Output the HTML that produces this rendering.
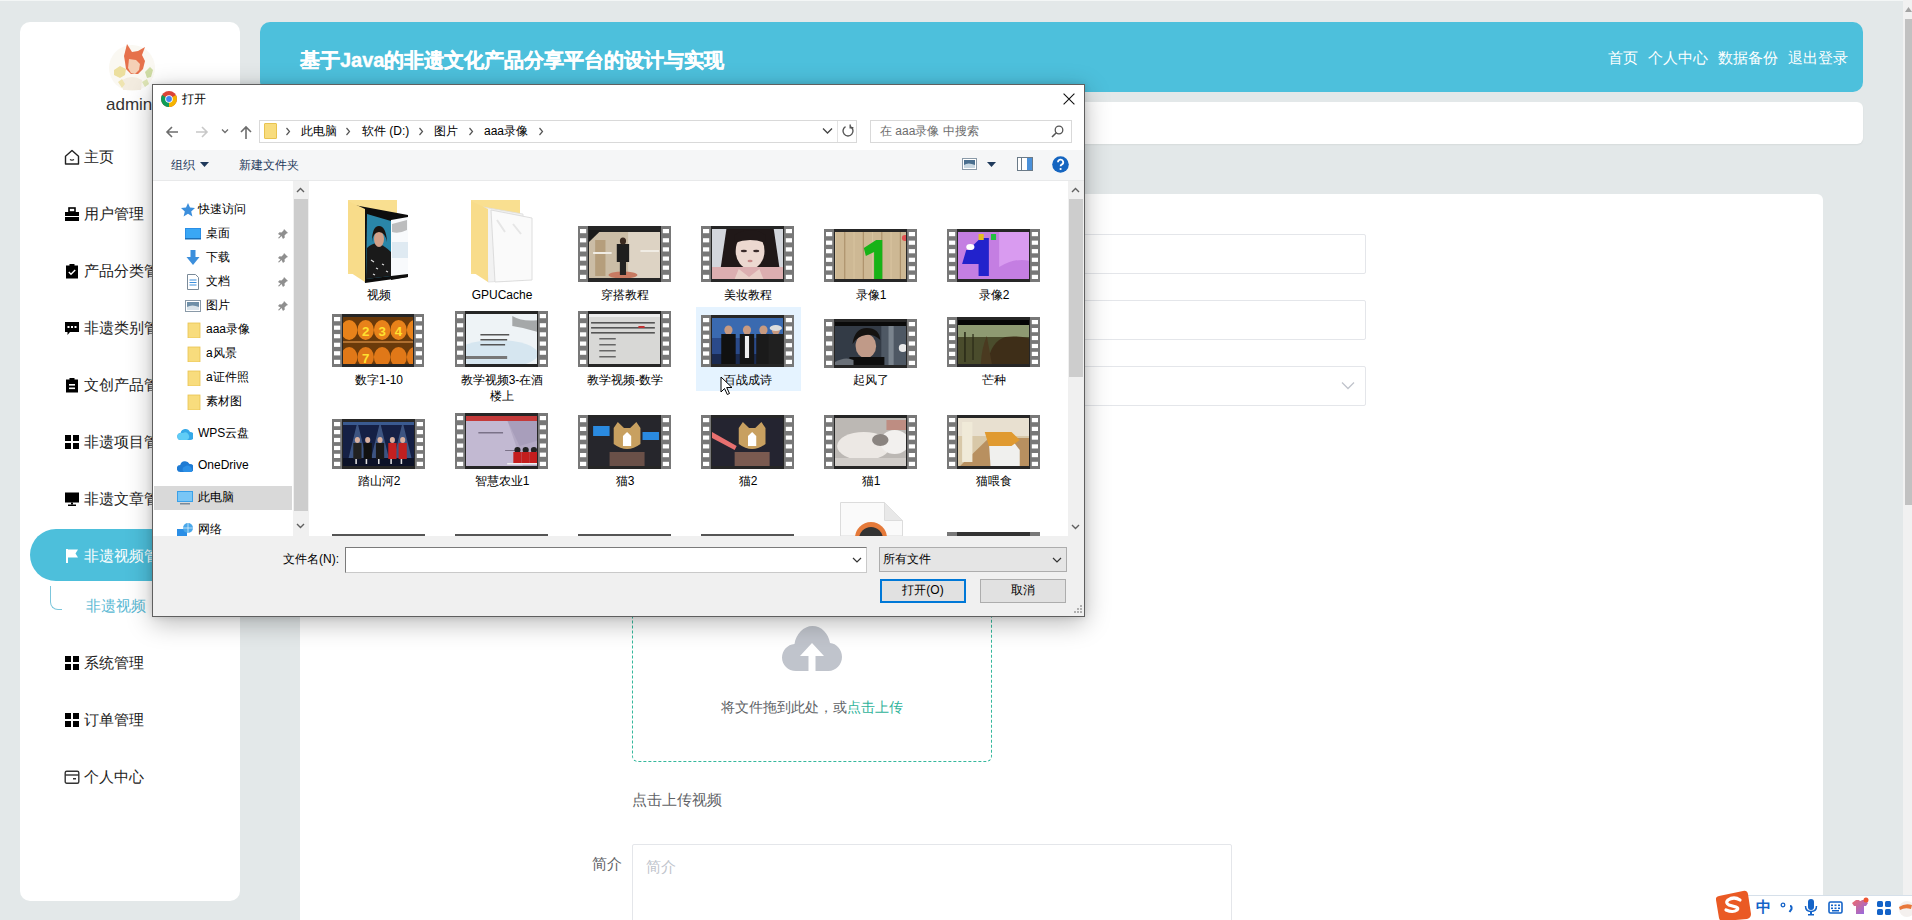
<!DOCTYPE html>
<html><head><meta charset="utf-8">
<style>
*{box-sizing:border-box;margin:0;padding:0}
html,body{width:1912px;height:920px;overflow:hidden}
body{background:#e3e8e9;font-family:"Liberation Sans",sans-serif;position:relative;color:#303133}
.abs{position:absolute}
.side{left:20px;top:22px;width:220px;height:879px;background:#fff;border-radius:10px}
.avatar{left:110px;top:46px;width:44px;height:44px;border-radius:50%;background:radial-gradient(circle at 55% 40%,#e88a5c 0,#f0b090 22%,#f6eee0 45%,#f8f5ec 70%,#fff 100%)}
.admin{left:106px;top:95px;font-size:17px;color:#333;line-height:20px}
.mi{left:64px;font-size:15px;color:#222;line-height:16px;height:16px;white-space:nowrap}
.mi svg{position:absolute;left:0;top:0}
.mi span{position:absolute;left:20px;top:0}
.active{left:30px;top:529px;width:205px;height:52px;border-radius:26px;background:#4dbfdb}
.header{left:260px;top:22px;width:1603px;height:70px;background:#4dc0dc;border-radius:10px}
.title{left:300px;top:47px;font-size:20px;font-weight:bold;color:#fff;line-height:26px;white-space:nowrap;-webkit-text-stroke:.35px #fff}
.nav{top:49px;font-size:15px;color:#fff;line-height:18px;white-space:nowrap}
.crumb{left:260px;top:102px;width:1603px;height:42px;background:#fff;border-radius:6px;box-shadow:0 1px 2px rgba(0,0,0,.06)}
.card{left:300px;top:194px;width:1523px;height:760px;background:#fff;border-radius:6px}
.inp{border:1px solid #e4e6ea;background:#fff;border-radius:2px}
.sb-track{left:1903px;top:0;width:9px;height:920px;background:#f1f1f1}
.dt{font-size:12px;line-height:14px;white-space:nowrap}
.sb-thumb{left:1905px;top:19px;width:7px;height:486px;background:#c1c1c1}
</style></head>
<body>
<!-- sidebar -->
<div class="abs side"></div>
<svg class="abs" style="left:108px;top:42px" width="48" height="50" viewBox="0 0 48 50"><defs><filter id="bl"><feGaussianBlur stdDeviation=".7"/></filter></defs><circle cx="24" cy="26" r="23" fill="#faf8f2"/><g filter="url(#bl)"><path d="M16 14l3-12 5 8 6-1 7-4-3 8 3 6-2 8-5 5-7 0-5-5-1-7z" fill="#e6714c"/><path d="M21 17l7 1 4 4-1 6-4 4-4-1-3-5z" fill="#f5d0b6"/><path d="M6 28l6-4 6 3-1 6-5 3-6-3z" fill="#ecdf9e"/><path d="M37 30l5-5 3 3-2 7-4 1z" fill="#cfdca4"/><path d="M14 38q10-6 20 0l-1 10H15z" fill="#f3ece0"/><path d="M10 40l4-3 3 5-3 4z" fill="#efe4b0"/><path d="M34 40l5-3 2 5-4 3z" fill="#dfe6b6"/></g></svg>
<div class="abs admin">admin</div>

<div class="abs active"></div>
<div class="abs mi" style="top:149px"><svg width="16" height="16" viewBox="0 0 16 16"><path d="M1.5 7.2 8 1.5l6.5 5.7V15h-13z" fill="none" stroke="#222" stroke-width="1.4" stroke-linejoin="round"/><path d="M6 10.5q2 1.4 4 0" fill="none" stroke="#222" stroke-width="1.3"/></svg><span>主页</span></div>
<div class="abs mi" style="top:206px"><svg width="16" height="16" viewBox="0 0 16 16"><rect x="5" y="2" width="6" height="4" fill="none" stroke="#000" stroke-width="1.6"/><rect x="1" y="6" width="14" height="4" fill="#000"/><rect x="1" y="11" width="14" height="4" fill="#000"/></svg><span>用户管理</span></div>
<div class="abs mi" style="top:263px"><svg width="16" height="16" viewBox="0 0 16 16"><rect x="2" y="2.5" width="12" height="13" fill="#000"/><rect x="5.5" y="1" width="5" height="2.5" fill="#000"/><path d="M4.8 9 7 11.2 11.2 7" fill="none" stroke="#fff" stroke-width="1.4"/></svg><span>产品分类管理</span></div>
<div class="abs mi" style="top:320px"><svg width="16" height="16" viewBox="0 0 16 16"><path d="M1 2h14v10H6l-2.5 3v-3H1z" fill="#000"/><rect x="3.5" y="6" width="2" height="2" fill="#fff"/><rect x="7" y="6" width="2" height="2" fill="#fff"/><rect x="10.5" y="6" width="2" height="2" fill="#fff"/></svg><span>非遗类别管理</span></div>
<div class="abs mi" style="top:377px"><svg width="16" height="16" viewBox="0 0 16 16"><rect x="2" y="2.5" width="12" height="13" fill="#000"/><rect x="5.5" y="1" width="5" height="2.5" fill="#000"/><rect x="5" y="7" width="6" height="1.6" fill="#fff"/><rect x="5" y="10.5" width="6" height="1.6" fill="#fff"/></svg><span>文创产品管理</span></div>
<div class="abs mi" style="top:434px"><svg width="16" height="16" viewBox="0 0 16 16"><rect x="1" y="1" width="6" height="6" fill="#000"/><rect x="9" y="1" width="6" height="6" fill="#000"/><rect x="1" y="9" width="6" height="6" fill="#000"/><rect x="9" y="9" width="6" height="6" fill="#000"/></svg><span>非遗项目管理</span></div>
<div class="abs mi" style="top:491px"><svg width="16" height="16" viewBox="0 0 16 16"><rect x="1" y="1.5" width="14" height="10" fill="#000"/><rect x="7" y="11.5" width="2" height="2" fill="#000"/><rect x="4" y="13.5" width="8" height="1.5" fill="#000"/></svg><span>非遗文章管理</span></div>
<div class="abs mi" style="top:655px"><svg width="16" height="16" viewBox="0 0 16 16"><rect x="1" y="1" width="6" height="6" fill="#000"/><rect x="9" y="1" width="6" height="6" fill="#000"/><rect x="1" y="9" width="6" height="6" fill="#000"/><rect x="9" y="9" width="6" height="6" fill="#000"/></svg><span>系统管理</span></div>
<div class="abs mi" style="top:712px"><svg width="16" height="16" viewBox="0 0 16 16"><rect x="1" y="1" width="6" height="6" fill="#000"/><rect x="9" y="1" width="6" height="6" fill="#000"/><rect x="1" y="9" width="6" height="6" fill="#000"/><rect x="9" y="9" width="6" height="6" fill="#000"/></svg><span>订单管理</span></div>
<div class="abs mi" style="top:769px"><svg width="16" height="16" viewBox="0 0 16 16"><rect x="1.2" y="2.2" width="13.6" height="12" rx="1.5" fill="none" stroke="#333" stroke-width="1.4"/><path d="M1.2 6h13.6" stroke="#333" stroke-width="1.4"/><rect x="9" y="9" width="3" height="1.5" fill="#333"/></svg><span>个人中心</span></div>
<div class="abs mi" style="top:548px;color:#fff"><svg width="16" height="16" viewBox="0 0 16 16"><path d="M2 1h2v14H2z" fill="#fff"/><path d="M4 1.5h10l-2.5 4 2.5 4H4z" fill="#fff"/></svg><span>非遗视频管理</span></div>
<div class="abs" style="left:50px;top:586px;width:12px;height:24px;border-left:1.5px solid #7cc6dc;border-bottom:1.5px solid #7cc6dc;border-bottom-left-radius:8px"></div>
<div class="abs mi" style="left:86px;top:598px;color:#5ab8d3"><span style="left:0">非遗视频</span></div>
<div class="abs sb-track"></div>
<div class="abs sb-thumb"></div>
<div class="abs" style="left:0;top:0;width:1903px;height:1px;background:#f3f6f6"></div>
<svg class="abs" style="left:1905px;top:6px" width="7" height="6" viewBox="0 0 7 6"><path d="M0 6 3.5 1 7 6z" fill="#a3a3a3"/></svg>

<!-- header -->
<div class="abs header"></div>
<div class="abs title">基于Java的非遗文化产品分享平台的设计与实现</div>
<div class="abs nav" style="left:1608px">首页</div>
<div class="abs nav" style="left:1648px">个人中心</div>
<div class="abs nav" style="left:1718px">数据备份</div>
<div class="abs nav" style="left:1788px">退出登录</div>
<div class="abs crumb"></div>

<!-- main card -->
<div class="abs card"></div>
<div class="abs inp" style="left:632px;top:234px;width:734px;height:40px"></div>
<div class="abs inp" style="left:632px;top:300px;width:734px;height:40px"></div>
<div class="abs inp" style="left:632px;top:366px;width:734px;height:40px"></div>

<!-- upload -->
<div class="abs" style="left:632px;top:581px;width:360px;height:181px;border:1px dashed #35b89c;border-radius:6px;background:#fff"></div>
<svg class="abs" style="left:782px;top:626px" width="60" height="45" viewBox="0 0 60 45"><path d="M14 45C6 45 0 39 0 31.5 0 24.5 5.5 18.5 12.5 18 14 8 21.5 0 30.5 0 39.5 0 46.5 7.5 48 17 54.5 17.5 60 23.5 60 31 60 38.5 54 45 46.5 45z" fill="#c0c4cc"/><path d="M30 17 18 30h8.5v15h7V30H42z" fill="#fff"/></svg>
<div class="abs" style="left:721px;top:699px;font-size:14px;line-height:16px;color:#606266;white-space:nowrap">将文件拖到此处，或<span style="color:#2fb39a">点击上传</span></div>
<div class="abs" style="left:632px;top:792px;font-size:15px;line-height:16px;color:#606266;white-space:nowrap">点击上传视频</div>
<div class="abs" style="left:592px;top:856px;font-size:15px;line-height:16px;color:#606266;white-space:nowrap">简介</div>
<div class="abs" style="left:632px;top:844px;width:600px;height:120px;border:1px solid #e4e6ea;border-radius:2px"></div>
<div class="abs" style="left:646px;top:859px;font-size:15px;line-height:16px;color:#c0c4cc;white-space:nowrap">简介</div>
<svg class="abs" style="left:1341px;top:381px" width="14" height="9" viewBox="0 0 14 9"><path d="M1 1.5 7 7.5 13 1.5" fill="none" stroke="#c0c4cc" stroke-width="1.3"/></svg>

<!-- IME bar -->
<div class="abs" style="left:1744px;top:895px;width:168px;height:25px;background:#fff;border-top:1px solid #d6e0ea"></div>
<svg class="abs" style="left:1716px;top:890px" width="36" height="30" viewBox="0 0 36 30"><path d="M3 6 27 1q4-1 5 3l3 20q0 4-4 5L8 31q-4 1-5-3L0 10q-1-3 3-4z" fill="#ea5a24"/><path d="M24 10q-6-4-12 0-3 3 1 5l7 2q3 1 1 3-4 3-11 0" fill="none" stroke="#fff" stroke-width="3.2" stroke-linecap="round"/></svg>
<div class="abs" style="left:1756px;top:899px;font-size:15px;font-weight:bold;line-height:16px;color:#1463c8">中</div>
<svg class="abs" style="left:1780px;top:900px" width="14" height="14" viewBox="0 0 14 14"><circle cx="3" cy="5" r="1.8" fill="none" stroke="#1463c8" stroke-width="1.3"/><path d="M10 6q2 0 1.5 3l-2 3" fill="none" stroke="#1463c8" stroke-width="2"/></svg>
<svg class="abs" style="left:1804px;top:899px" width="14" height="17" viewBox="0 0 14 17"><rect x="4" y="0" width="6" height="11" rx="3" fill="#1463c8"/><path d="M1.5 7q0 5.5 5.5 5.5T12.5 7" fill="none" stroke="#1463c8" stroke-width="1.5"/><rect x="6" y="12" width="2" height="3" fill="#1463c8"/><rect x="4" y="15" width="6" height="1.5" fill="#1463c8"/></svg>
<svg class="abs" style="left:1828px;top:901px" width="15" height="13" viewBox="0 0 15 13"><rect x="1" y="1" width="13" height="11" rx="1.5" fill="none" stroke="#1463c8" stroke-width="1.6"/><g fill="#1463c8"><rect x="3" y="3.5" width="2" height="1.6"/><rect x="6.5" y="3.5" width="2" height="1.6"/><rect x="10" y="3.5" width="2" height="1.6"/><rect x="3" y="6.5" width="2" height="1.6"/><rect x="6.5" y="6.5" width="2" height="1.6"/><rect x="10" y="6.5" width="2" height="1.6"/><rect x="4" y="9" width="7" height="1.5"/></g></svg>
<svg class="abs" style="left:1851px;top:897px" width="18" height="18" viewBox="0 0 18 18"><defs><linearGradient id="tsh" x1="0" y1="0" x2="1" y2="1"><stop offset="0" stop-color="#f06a6a"/><stop offset="1" stop-color="#8a6af0"/></linearGradient></defs><path d="M1 6l4-3h3q1 2 3 0h3l3 3-2 3h-2v8H5V9H3z" fill="url(#tsh)"/><circle cx="15" cy="3" r="2.5" fill="#ee5533"/></svg>
<svg class="abs" style="left:1877px;top:901px" width="14" height="14" viewBox="0 0 14 14"><g fill="#1463c8"><rect x="0" y="0" width="6" height="6" rx="1.5"/><rect x="8" y="0" width="6" height="6" rx="1.5"/><rect x="0" y="8" width="6" height="6" rx="1.5"/><rect x="8" y="8" width="6" height="6" rx="1.5"/></g></svg>
<svg class="abs" style="left:1897px;top:899px" width="15" height="18" viewBox="0 0 15 18"><circle cx="10" cy="10" r="8" fill="#f4f0ee"/><path d="M2 8q6-4 13-2l-1 4q-6-2-11 1z" fill="#e8773a"/></svg>

<!--DIALOG-->
<div class="abs" style="left:152px;top:84px;width:933px;height:533px;background:#fff;border:1px solid #5f5f5f;box-shadow:0 6px 24px rgba(0,0,0,.28),0 0 6px rgba(0,0,0,.12)"></div>
<svg class="abs" style="left:161px;top:91px" width="16" height="16" viewBox="0 0 16 16"><circle cx="8" cy="8" r="8" fill="#db4437"/><path d="M8 8 1.1 4A8 8 0 0 0 8 16z" fill="#0f9d58"/><path d="M8 8 14.9 4A8 8 0 0 1 8 16z" fill="#f4b400"/><circle cx="8" cy="8" r="3.8" fill="#fff"/><circle cx="8" cy="8" r="2.9" fill="#4285f4"/></svg>
<div class="abs dt" style="left:182px;top:92px;font-size:12px;color:#000">打开</div>
<svg class="abs" style="left:1063px;top:93px" width="12" height="12" viewBox="0 0 12 12"><path d="M.6 .6 11.4 11.4M11.4 .6 .6 11.4" stroke="#111" stroke-width="1.1"/></svg>
<svg class="abs" style="left:164px;top:124px" width="16" height="16" viewBox="0 0 16 16"><path d="M14 8H3M8 3 3 8l5 5" fill="none" stroke="#6d6d6d" stroke-width="1.6"/></svg>
<svg class="abs" style="left:194px;top:124px" width="16" height="16" viewBox="0 0 16 16"><path d="M2 8h11M8 3l5 5-5 5" fill="none" stroke="#c8c8c8" stroke-width="1.6"/></svg>
<svg class="abs" style="left:221px;top:128px" width="8" height="6" viewBox="0 0 8 6"><path d="M1 1.5 4 4.5 7 1.5" fill="none" stroke="#6d6d6d" stroke-width="1.3"/></svg>
<svg class="abs" style="left:238px;top:124px" width="16" height="16" viewBox="0 0 16 16"><path d="M8 15V3M3 8l5-5 5 5" fill="none" stroke="#6d6d6d" stroke-width="1.6"/></svg>
<div class="abs" style="left:259px;top:120px;width:598px;height:23px;border:1px solid #d9d9d9;background:#fff"></div>
<div class="abs" style="left:264px;top:123px;width:13px;height:16px;background:#f8dc7d;border:1px solid #e8c350;border-radius:1px"></div>
<svg class="abs" style="left:285px;top:127px" width="6" height="9" viewBox="0 0 6 9"><path d="M1.5 1 4.5 4.5 1.5 8" fill="none" stroke="#555" stroke-width="1.2"/></svg>
<div class="abs dt" style="left:301px;top:124px;font-size:12px;color:#000">此电脑</div>
<svg class="abs" style="left:345px;top:127px" width="6" height="9" viewBox="0 0 6 9"><path d="M1.5 1 4.5 4.5 1.5 8" fill="none" stroke="#555" stroke-width="1.2"/></svg>
<div class="abs dt" style="left:362px;top:124px;font-size:12px;color:#000">软件 (D:)</div>
<svg class="abs" style="left:418px;top:127px" width="6" height="9" viewBox="0 0 6 9"><path d="M1.5 1 4.5 4.5 1.5 8" fill="none" stroke="#555" stroke-width="1.2"/></svg>
<div class="abs dt" style="left:434px;top:124px;font-size:12px;color:#000">图片</div>
<svg class="abs" style="left:468px;top:127px" width="6" height="9" viewBox="0 0 6 9"><path d="M1.5 1 4.5 4.5 1.5 8" fill="none" stroke="#555" stroke-width="1.2"/></svg>
<div class="abs dt" style="left:484px;top:124px;font-size:12px;color:#000">aaa录像</div>
<svg class="abs" style="left:538px;top:127px" width="6" height="9" viewBox="0 0 6 9"><path d="M1.5 1 4.5 4.5 1.5 8" fill="none" stroke="#555" stroke-width="1.2"/></svg>
<svg class="abs" style="left:822px;top:127px" width="11" height="8" viewBox="0 0 11 8"><path d="M1 1.5 5.5 6 10 1.5" fill="none" stroke="#444" stroke-width="1.3"/></svg>
<div class="abs" style="left:837px;top:121px;width:1px;height:21px;background:#e3e3e3"></div>
<svg class="abs" style="left:841px;top:124px" width="14" height="14" viewBox="0 0 14 14"><path d="M4.5 2.6A5 5 0 1 0 9.5 2.6" fill="none" stroke="#555" stroke-width="1.4"/><path d="M9.2 .5v3.2h3.2" fill="none" stroke="#555" stroke-width="1.4"/></svg>
<div class="abs" style="left:870px;top:120px;width:202px;height:23px;border:1px solid #d9d9d9;background:#fff"></div>
<div class="abs dt" style="left:880px;top:124px;font-size:12px;color:#6d6d6d">在 aaa录像 中搜索</div>
<svg class="abs" style="left:1051px;top:125px" width="13" height="13" viewBox="0 0 13 13"><circle cx="8" cy="5" r="3.8" fill="none" stroke="#555" stroke-width="1.3"/><path d="M5.3 7.7 1 12" stroke="#555" stroke-width="1.6"/></svg>
<div class="abs" style="left:153px;top:150px;width:931px;height:31px;background:#f5f6f7;border-bottom:1px solid #e8e9ea"></div>
<div class="abs dt" style="left:171px;top:158px;font-size:12px;color:#1e395b">组织</div>
<svg class="abs" style="left:200px;top:162px" width="9" height="5" viewBox="0 0 9 5"><path d="M0 0h9L4.5 5z" fill="#1e395b"/></svg>
<div class="abs dt" style="left:239px;top:158px;font-size:12px;color:#1e395b">新建文件夹</div>
<svg class="abs" style="left:962px;top:158px" width="15" height="12" viewBox="0 0 15 12"><rect x=".5" y=".5" width="14" height="11" fill="#fff" stroke="#8a9aa8"/><rect x="2" y="2" width="11" height="8" fill="#4a6f8f"/><path d="M2 7q4-3 11 0v3H2z" fill="#c9d8e2"/></svg>
<svg class="abs" style="left:987px;top:162px" width="9" height="5" viewBox="0 0 9 5"><path d="M0 0h9L4.5 5z" fill="#1e395b"/></svg>
<svg class="abs" style="left:1017px;top:157px" width="16" height="14" viewBox="0 0 16 14"><rect x=".5" y=".5" width="15" height="13" fill="#fff" stroke="#6a7a88"/><rect x="10" y="1" width="5" height="12" fill="#4a90d9"/><path d="M4.5 1v12" stroke="#6a7a88"/></svg>
<svg class="abs" style="left:1052px;top:156px" width="17" height="17" viewBox="0 0 17 17"><circle cx="8.5" cy="8.5" r="8.3" fill="#1565c0"/><path d="M6 6.3a2.6 2.6 0 1 1 3.6 2.3c-.8.4-1 .8-1 1.7" fill="none" stroke="#fff" stroke-width="1.8"/><circle cx="8.6" cy="13" r="1.1" fill="#fff"/></svg>
<div class="abs" style="left:154px;top:486px;width:138px;height:24px;background:#d9d9d9"></div>
<svg class="abs" style="left:180px;top:202px" width="16" height="16" viewBox="0 0 16 16"><path d="M8 1l2 4.6 5 .5-3.8 3.3 1.2 5L8 11.8 3.6 14.4l1.2-5L1 6.1l5-.5z" fill="#3c8fdc"/></svg>
<div class="abs dt" style="left:198px;top:202px;font-size:12px;color:#000">快速访问</div>
<svg class="abs" style="left:185px;top:226px" width="16" height="16" viewBox="0 0 16 16"><rect x="0" y="2" width="16" height="11" fill="#2a8ee6"/><rect x="1" y="3" width="14" height="9" fill="#39a7f5"/><rect x="0" y="12" width="16" height="1.5" fill="#1b6fb8"/></svg>
<div class="abs dt" style="left:206px;top:226px;font-size:12px;color:#000">桌面</div>
<svg class="abs" style="left:185px;top:250px" width="16" height="16" viewBox="0 0 16 16"><path d="M5.5 0h5v7h4L8 15 1.5 7h4z" fill="#3c8fdc"/></svg>
<div class="abs dt" style="left:206px;top:250px;font-size:12px;color:#000">下载</div>
<svg class="abs" style="left:185px;top:274px" width="16" height="16" viewBox="0 0 16 16"><path d="M2.5.5h8l3 3v12h-11z" fill="#fff" stroke="#7a8a99"/><path d="M4.5 6h7M4.5 8.5h7M4.5 11h7" stroke="#3c8fdc" stroke-width="1"/></svg>
<div class="abs dt" style="left:206px;top:274px;font-size:12px;color:#000">文档</div>
<svg class="abs" style="left:185px;top:298px" width="16" height="16" viewBox="0 0 16 16"><rect x=".5" y="2.5" width="15" height="11" fill="#fff" stroke="#8a9aa8"/><rect x="2" y="4" width="12" height="8" fill="#6f8fa8"/><path d="M2 9q5-3 12 0v3H2z" fill="#d9e3ea"/></svg>
<div class="abs dt" style="left:206px;top:298px;font-size:12px;color:#000">图片</div>
<svg class="abs" style="left:187px;top:322px" width="16" height="16" viewBox="0 0 16 16"><rect x="1" y="1" width="12" height="15" fill="#f8dc7d"/><rect x="1" y="1" width="12" height="15" fill="none" stroke="#e8c350" stroke-width=".8"/></svg>
<div class="abs dt" style="left:206px;top:322px;font-size:12px;color:#000">aaa录像</div>
<svg class="abs" style="left:187px;top:346px" width="16" height="16" viewBox="0 0 16 16"><rect x="1" y="1" width="12" height="15" fill="#f8dc7d"/><rect x="1" y="1" width="12" height="15" fill="none" stroke="#e8c350" stroke-width=".8"/></svg>
<div class="abs dt" style="left:206px;top:346px;font-size:12px;color:#000">a风景</div>
<svg class="abs" style="left:187px;top:370px" width="16" height="16" viewBox="0 0 16 16"><rect x="1" y="1" width="12" height="15" fill="#f8dc7d"/><rect x="1" y="1" width="12" height="15" fill="none" stroke="#e8c350" stroke-width=".8"/></svg>
<div class="abs dt" style="left:206px;top:370px;font-size:12px;color:#000">a证件照</div>
<svg class="abs" style="left:187px;top:394px" width="16" height="16" viewBox="0 0 16 16"><rect x="1" y="1" width="12" height="15" fill="#f8dc7d"/><rect x="1" y="1" width="12" height="15" fill="none" stroke="#e8c350" stroke-width=".8"/></svg>
<div class="abs dt" style="left:206px;top:394px;font-size:12px;color:#000">素材图</div>
<svg class="abs" style="left:177px;top:426px" width="16" height="16" viewBox="0 0 16 16"><path d="M4 14a3.5 3.5 0 0 1-.5-7A5 5 0 0 1 13 6a4 4 0 0 1 0 8z" fill="#35a9e8"/><path d="M4 14a3.5 3.5 0 0 1 0-7h2a4 4 0 0 1 4 7z" fill="#60cdf6"/></svg>
<div class="abs dt" style="left:198px;top:426px;font-size:12px;color:#000">WPS云盘</div>
<svg class="abs" style="left:177px;top:458px" width="16" height="16" viewBox="0 0 16 16"><path d="M3.5 14a3.5 3.5 0 0 1-.3-7A5 5 0 0 1 12.5 6 4 4 0 0 1 13 14z" fill="#1e7bd4"/><path d="M7 14a3 3 0 0 1 1-5.5 4 4 0 0 1 6.5 2A2 2 0 0 1 14 14z" fill="#2b8fe6"/></svg>
<div class="abs dt" style="left:198px;top:458px;font-size:12px;color:#000">OneDrive</div>
<svg class="abs" style="left:177px;top:490px" width="16" height="16" viewBox="0 0 16 16"><rect x="0" y="1" width="16" height="11" fill="#3aa0e8"/><rect x="1" y="2" width="14" height="9" fill="#79c6f6"/><rect x="3" y="13" width="10" height="1.5" fill="#7a8a99"/></svg>
<div class="abs dt" style="left:198px;top:490px;font-size:12px;color:#000">此电脑</div>
<svg class="abs" style="left:177px;top:522px" width="16" height="16" viewBox="0 0 16 16"><rect x="0" y="7" width="10" height="8" fill="#2a8ee6"/><circle cx="11" cy="6" r="5" fill="#4aa8ea"/><path d="M11 1v10M6 6h10" stroke="#fff" stroke-width=".6"/></svg>
<div class="abs dt" style="left:198px;top:522px;font-size:12px;color:#000">网络</div>
<svg class="abs" style="left:278px;top:228px" width="11" height="11" viewBox="0 0 11 11"><path d="M6 1l4 4-1.5.5-2 2 .3 2L5 11 3.5 8 1 10.5 0 10l2.5-2.5L0 6l1.5-1.8 2 .3 2-2z" fill="#8f8f8f"/></svg>
<svg class="abs" style="left:278px;top:252px" width="11" height="11" viewBox="0 0 11 11"><path d="M6 1l4 4-1.5.5-2 2 .3 2L5 11 3.5 8 1 10.5 0 10l2.5-2.5L0 6l1.5-1.8 2 .3 2-2z" fill="#8f8f8f"/></svg>
<svg class="abs" style="left:278px;top:276px" width="11" height="11" viewBox="0 0 11 11"><path d="M6 1l4 4-1.5.5-2 2 .3 2L5 11 3.5 8 1 10.5 0 10l2.5-2.5L0 6l1.5-1.8 2 .3 2-2z" fill="#8f8f8f"/></svg>
<svg class="abs" style="left:278px;top:300px" width="11" height="11" viewBox="0 0 11 11"><path d="M6 1l4 4-1.5.5-2 2 .3 2L5 11 3.5 8 1 10.5 0 10l2.5-2.5L0 6l1.5-1.8 2 .3 2-2z" fill="#8f8f8f"/></svg>
<div class="abs" style="left:293px;top:181px;width:16px;height:355px;background:#f0f0f0"></div>
<div class="abs" style="left:294px;top:199px;width:14px;height:312px;background:#cdcdcd"></div>
<svg class="abs" style="left:296px;top:187px" width="9" height="6" viewBox="0 0 9 6"><path d="M1 5 4.5 1.5 8 5" fill="none" stroke="#606060" stroke-width="1.4"/></svg>
<svg class="abs" style="left:296px;top:523px" width="9" height="6" viewBox="0 0 9 6"><path d="M1 1 4.5 4.5 8 1" fill="none" stroke="#606060" stroke-width="1.4"/></svg>
<div class="abs" style="left:309px;top:181px;width:2px;height:355px;background:#fff"></div>
<div class="abs" style="left:1068px;top:181px;width:16px;height:355px;background:#f0f0f0"></div>
<div class="abs" style="left:1069px;top:199px;width:14px;height:178px;background:#cdcdcd"></div>
<svg class="abs" style="left:1071px;top:187px" width="9" height="6" viewBox="0 0 9 6"><path d="M1 5 4.5 1.5 8 5" fill="none" stroke="#606060" stroke-width="1.4"/></svg>
<svg class="abs" style="left:1071px;top:524px" width="9" height="6" viewBox="0 0 9 6"><path d="M1 1 4.5 4.5 8 1" fill="none" stroke="#606060" stroke-width="1.4"/></svg>
<div class="abs" style="left:153px;top:536px;width:931px;height:80px;background:#f0f0f0"></div>
<div class="abs dt" style="left:283px;top:552px;font-size:12px;color:#000">文件名(N):</div>
<div class="abs" style="left:345px;top:547px;width:522px;height:26px;background:#fff;border:1px solid #7a7a7a;border-right-color:#c9c9c9;border-bottom-color:#c9c9c9"></div>
<svg class="abs" style="left:852px;top:557px" width="10" height="6" viewBox="0 0 10 6"><path d="M1 1 5 5 9 1" fill="none" stroke="#333" stroke-width="1.2"/></svg>
<div class="abs" style="left:879px;top:547px;width:188px;height:25px;background:#e5e5e5;border:1px solid #adadad"></div>
<div class="abs dt" style="left:883px;top:552px;font-size:12px;color:#000">所有文件</div>
<svg class="abs" style="left:1052px;top:557px" width="10" height="6" viewBox="0 0 10 6"><path d="M1 1 5 5 9 1" fill="none" stroke="#333" stroke-width="1.2"/></svg>
<div class="abs" style="left:880px;top:579px;width:86px;height:24px;background:#e1e1e1;border:2px solid #0078d7"></div>
<div class="abs dt" style="left:880px;top:583px;font-size:12px;color:#000;width:86px;text-align:center">打开(O)</div>
<div class="abs" style="left:980px;top:579px;width:86px;height:24px;background:#e1e1e1;border:1px solid #adadad"></div>
<div class="abs dt" style="left:980px;top:583px;font-size:12px;color:#000;width:86px;text-align:center">取消</div>
<svg class="abs" style="left:1073px;top:604px" width="10" height="10" viewBox="0 0 10 10"><g fill="#b0b0b0"><rect x="7" y="1" width="2" height="2"/><rect x="4" y="4" width="2" height="2"/><rect x="7" y="4" width="2" height="2"/><rect x="1" y="7" width="2" height="2"/><rect x="4" y="7" width="2" height="2"/><rect x="7" y="7" width="2" height="2"/></g></svg>
<!--THUMBS-->
<div class="abs" style="left:696px;top:307px;width:105px;height:84px;background:#e5f3ff"></div>
<svg class="abs" style="left:346px;top:198px" width="66" height="88" viewBox="0 0 66 88">
<rect x="2" y="2" width="49" height="74" fill="#f9df90"/>
<path d="M8 7 62 17v62L19 85z" fill="#0d0d0d"/>
<path d="M21 16 45 23v55L20 81z" fill="#2a86a8"/>
<path d="M21 50q6-6 12-4 6 2 12 8v24L20 81z" fill="#1a1a1a"/>
<path d="M25 62l3 2M30 70l2 1M36 66l2 1M27 76l2 1M40 73l2 1" stroke="#ddd" stroke-width="1.2"/>
<ellipse cx="33" cy="41" rx="5" ry="8" fill="#d2a088"/><path d="M26 44q0-16 7-16t8 16q-2-10-8-10-6 0-7 10z" fill="#1a1410"/>
<path d="M45 22 62 19v58L45 80z" fill="#f8fafc"/><path d="M46 26l15-4v10q-8 4-15 2z" fill="#8a8a8a" opacity=".55"/><path d="M46 44h16v16H46z" fill="#dfeaf2"/>
<path d="M45 78 62 76v3L45 82z" fill="#0d0d0d"/>
<path d="M2 3 19 11v73L2 73z" fill="#f8dc8a"/>
</svg>
<svg class="abs" style="left:469px;top:198px" width="66" height="88" viewBox="0 0 66 88">
<rect x="2" y="2" width="49" height="74" fill="#f9df90"/>
<path d="M14 9 54 16v66L19 84z" fill="#f2f2f2" stroke="#dedede" stroke-width=".8"/>
<path d="M22 12 63 20v62L26 84z" fill="#fafafa" stroke="#d6d6d6" stroke-width=".8"/>
<path d="M28 22l8 12M44 26l8 10" stroke="#e6e6e6" stroke-width="2"/>
<path d="M2 3 19 11v73L2 73z" fill="#f8dc8a"/>
</svg>
<svg class="abs" style="left:578px;top:226px" width="93" height="56" viewBox="0 0 93 56"><rect width="93" height="56" fill="#787878"/><rect x="2" y="3.0" width="6.2" height="4.2" fill="#fff"/><rect x="84.8" y="3.0" width="6.2" height="4.2" fill="#fff"/><rect x="2" y="12.2" width="6.2" height="4.2" fill="#fff"/><rect x="84.8" y="12.2" width="6.2" height="4.2" fill="#fff"/><rect x="2" y="21.3" width="6.2" height="4.2" fill="#fff"/><rect x="84.8" y="21.3" width="6.2" height="4.2" fill="#fff"/><rect x="2" y="30.5" width="6.2" height="4.2" fill="#fff"/><rect x="84.8" y="30.5" width="6.2" height="4.2" fill="#fff"/><rect x="2" y="39.6" width="6.2" height="4.2" fill="#fff"/><rect x="84.8" y="39.6" width="6.2" height="4.2" fill="#fff"/><rect x="2" y="48.8" width="6.2" height="4.2" fill="#fff"/><rect x="84.8" y="48.8" width="6.2" height="4.2" fill="#fff"/><rect x="10" y="0" width="73" height="56" fill="#262626"/><svg x="11" y="4" width="71" height="48" viewBox="0 0 69 48" preserveAspectRatio="none"><rect x="0" y="0" width="69" height="48" fill="#cbbda6" /><rect x="38" y="0" width="31" height="48" fill="#ddd3c4" /><rect x="0" y="0" width="69" height="2" fill="#222" /><path d="M0 0h12L0 12z" fill="#1a1a1a"/><rect x="6" y="10" width="10" height="36" fill="#b59e7c" /><ellipse cx="33" cy="45" rx="14" ry="3.5" fill="#c87a62" /><rect x="27" y="14" width="12" height="18" fill="#1e1e1e" /><rect x="30" y="30" width="6" height="15" fill="#222" /><ellipse cx="33" cy="11" rx="3" ry="3.5" fill="#3a2a20" /><rect x="4" y="22" width="18" height="2" fill="#f0ece4" /><rect x="50" y="20" width="18" height="2" fill="#f0ece4" /></svg></svg>
<svg class="abs" style="left:701px;top:226px" width="93" height="56" viewBox="0 0 93 56"><rect width="93" height="56" fill="#787878"/><rect x="2" y="3.0" width="6.2" height="4.2" fill="#fff"/><rect x="84.8" y="3.0" width="6.2" height="4.2" fill="#fff"/><rect x="2" y="12.2" width="6.2" height="4.2" fill="#fff"/><rect x="84.8" y="12.2" width="6.2" height="4.2" fill="#fff"/><rect x="2" y="21.3" width="6.2" height="4.2" fill="#fff"/><rect x="84.8" y="21.3" width="6.2" height="4.2" fill="#fff"/><rect x="2" y="30.5" width="6.2" height="4.2" fill="#fff"/><rect x="84.8" y="30.5" width="6.2" height="4.2" fill="#fff"/><rect x="2" y="39.6" width="6.2" height="4.2" fill="#fff"/><rect x="84.8" y="39.6" width="6.2" height="4.2" fill="#fff"/><rect x="2" y="48.8" width="6.2" height="4.2" fill="#fff"/><rect x="84.8" y="48.8" width="6.2" height="4.2" fill="#fff"/><rect x="10" y="0" width="73" height="56" fill="#262626"/><svg x="11" y="3" width="71" height="50" viewBox="0 0 69 50" preserveAspectRatio="none"><rect x="0" y="0" width="69" height="50" fill="#d3d6dc" /><path d="M14 0h46l6 42H8z" fill="#201818"/><ellipse cx="37" cy="22" rx="14" ry="18" fill="#ecd8d0" /><path d="M22 6q15-10 30 0v8q-15-6-30 0z" fill="#201818"/><rect x="0" y="38" width="69" height="12" fill="#dcaeb0" /><path d="M26 40l10 8 10-8 4 10H22z" fill="#e9cfc8"/><ellipse cx="31" cy="22" rx="3" ry="1.3" fill="#3a2a2a" /><ellipse cx="43" cy="22" rx="3" ry="1.3" fill="#3a2a2a" /><ellipse cx="37" cy="32" rx="2.5" ry="1.2" fill="#c88a88" /></svg></svg>
<svg class="abs" style="left:824px;top:229px" width="93" height="53" viewBox="0 0 93 53"><rect width="93" height="53" fill="#787878"/><rect x="2" y="3.0" width="6.2" height="4.2" fill="#fff"/><rect x="84.8" y="3.0" width="6.2" height="4.2" fill="#fff"/><rect x="2" y="11.6" width="6.2" height="4.2" fill="#fff"/><rect x="84.8" y="11.6" width="6.2" height="4.2" fill="#fff"/><rect x="2" y="20.1" width="6.2" height="4.2" fill="#fff"/><rect x="84.8" y="20.1" width="6.2" height="4.2" fill="#fff"/><rect x="2" y="28.7" width="6.2" height="4.2" fill="#fff"/><rect x="84.8" y="28.7" width="6.2" height="4.2" fill="#fff"/><rect x="2" y="37.2" width="6.2" height="4.2" fill="#fff"/><rect x="84.8" y="37.2" width="6.2" height="4.2" fill="#fff"/><rect x="2" y="45.8" width="6.2" height="4.2" fill="#fff"/><rect x="84.8" y="45.8" width="6.2" height="4.2" fill="#fff"/><rect x="10" y="0" width="73" height="53" fill="#262626"/><svg x="11" y="3" width="71" height="47" viewBox="0 0 69 47" preserveAspectRatio="none"><rect x="0" y="0" width="69" height="47" fill="#cdb894" /><rect x="0" y="0" width="1" height="47" fill="#d8c4a0" /><rect x="9" y="0" width="1" height="47" fill="#a88c66" /><rect x="18" y="0" width="1" height="47" fill="#d8c4a0" /><rect x="27" y="0" width="1" height="47" fill="#a88c66" /><rect x="36" y="0" width="1" height="47" fill="#d8c4a0" /><rect x="45" y="0" width="1" height="47" fill="#a88c66" /><rect x="54" y="0" width="1" height="47" fill="#d8c4a0" /><rect x="63" y="0" width="1" height="47" fill="#a88c66" /><path d="M28 16 40 8h6v40h-8V20l-8 4z" fill="#17b317"/><ellipse cx="68" cy="6" rx="3" ry="3" fill="#e05050" /></svg></svg>
<svg class="abs" style="left:947px;top:229px" width="93" height="53" viewBox="0 0 93 53"><rect width="93" height="53" fill="#787878"/><rect x="2" y="3.0" width="6.2" height="4.2" fill="#fff"/><rect x="84.8" y="3.0" width="6.2" height="4.2" fill="#fff"/><rect x="2" y="11.6" width="6.2" height="4.2" fill="#fff"/><rect x="84.8" y="11.6" width="6.2" height="4.2" fill="#fff"/><rect x="2" y="20.1" width="6.2" height="4.2" fill="#fff"/><rect x="84.8" y="20.1" width="6.2" height="4.2" fill="#fff"/><rect x="2" y="28.7" width="6.2" height="4.2" fill="#fff"/><rect x="84.8" y="28.7" width="6.2" height="4.2" fill="#fff"/><rect x="2" y="37.2" width="6.2" height="4.2" fill="#fff"/><rect x="84.8" y="37.2" width="6.2" height="4.2" fill="#fff"/><rect x="2" y="45.8" width="6.2" height="4.2" fill="#fff"/><rect x="84.8" y="45.8" width="6.2" height="4.2" fill="#fff"/><rect x="10" y="0" width="73" height="53" fill="#262626"/><svg x="11" y="3" width="71" height="47" viewBox="0 0 69 47" preserveAspectRatio="none"><rect x="0" y="0" width="69" height="47" fill="#c47ee2" /><path d="M40 0h33v30q-15-6-33 5z" fill="#d99bf0"/><path d="M14 14l8-8h8v38h-10V32H4l4-14h6z" fill="#2222cc"/><ellipse cx="12" cy="15" rx="4" ry="3" fill="#fff" /><rect x="20" y="2" width="5" height="6" fill="#e6c020" /><rect x="32" y="2" width="5" height="6" fill="#20c040" /></svg></svg>
<svg class="abs" style="left:332px;top:314px" width="92" height="53" viewBox="0 0 92 53"><rect width="92" height="53" fill="#787878"/><rect x="2" y="3.0" width="6.2" height="4.2" fill="#fff"/><rect x="83.8" y="3.0" width="6.2" height="4.2" fill="#fff"/><rect x="2" y="11.6" width="6.2" height="4.2" fill="#fff"/><rect x="83.8" y="11.6" width="6.2" height="4.2" fill="#fff"/><rect x="2" y="20.1" width="6.2" height="4.2" fill="#fff"/><rect x="83.8" y="20.1" width="6.2" height="4.2" fill="#fff"/><rect x="2" y="28.7" width="6.2" height="4.2" fill="#fff"/><rect x="83.8" y="28.7" width="6.2" height="4.2" fill="#fff"/><rect x="2" y="37.2" width="6.2" height="4.2" fill="#fff"/><rect x="83.8" y="37.2" width="6.2" height="4.2" fill="#fff"/><rect x="2" y="45.8" width="6.2" height="4.2" fill="#fff"/><rect x="83.8" y="45.8" width="6.2" height="4.2" fill="#fff"/><rect x="10" y="0" width="72" height="53" fill="#262626"/><svg x="11" y="3" width="70" height="47" viewBox="0 0 68 47" preserveAspectRatio="none"><rect x="0" y="0" width="68" height="47" fill="#6a3a0a" /><rect x="0" y="24" width="68" height="2" fill="#b07030" /><ellipse cx="6" cy="13" rx="8" ry="10" fill="#e8821a" /><ellipse cx="6" cy="40" rx="8" ry="10" fill="#e07818" /><ellipse cx="22" cy="13" rx="8" ry="10" fill="#e8821a" /><ellipse cx="22" cy="40" rx="8" ry="10" fill="#e07818" /><ellipse cx="38" cy="13" rx="8" ry="10" fill="#e8821a" /><ellipse cx="38" cy="40" rx="8" ry="10" fill="#e07818" /><ellipse cx="54" cy="13" rx="8" ry="10" fill="#e8821a" /><ellipse cx="54" cy="40" rx="8" ry="10" fill="#e07818" /><ellipse cx="70" cy="13" rx="8" ry="10" fill="#e8821a" /><ellipse cx="70" cy="40" rx="8" ry="10" fill="#e07818" /><text x="22" y="19" font-size="13" font-weight="bold" fill="#ffe030" text-anchor="middle" font-family="Liberation Sans">2</text><text x="38" y="19" font-size="13" font-weight="bold" fill="#ffe030" text-anchor="middle" font-family="Liberation Sans">3</text><text x="54" y="19" font-size="13" font-weight="bold" fill="#ffe030" text-anchor="middle" font-family="Liberation Sans">4</text><text x="22" y="46" font-size="13" font-weight="bold" fill="#ffe030" text-anchor="middle" font-family="Liberation Sans">7</text></svg></svg>
<svg class="abs" style="left:455px;top:311px" width="93" height="56" viewBox="0 0 93 56"><rect width="93" height="56" fill="#787878"/><rect x="2" y="3.0" width="6.2" height="4.2" fill="#fff"/><rect x="84.8" y="3.0" width="6.2" height="4.2" fill="#fff"/><rect x="2" y="12.2" width="6.2" height="4.2" fill="#fff"/><rect x="84.8" y="12.2" width="6.2" height="4.2" fill="#fff"/><rect x="2" y="21.3" width="6.2" height="4.2" fill="#fff"/><rect x="84.8" y="21.3" width="6.2" height="4.2" fill="#fff"/><rect x="2" y="30.5" width="6.2" height="4.2" fill="#fff"/><rect x="84.8" y="30.5" width="6.2" height="4.2" fill="#fff"/><rect x="2" y="39.6" width="6.2" height="4.2" fill="#fff"/><rect x="84.8" y="39.6" width="6.2" height="4.2" fill="#fff"/><rect x="2" y="48.8" width="6.2" height="4.2" fill="#fff"/><rect x="84.8" y="48.8" width="6.2" height="4.2" fill="#fff"/><rect x="10" y="0" width="73" height="56" fill="#262626"/><svg x="11" y="3" width="71" height="50" viewBox="0 0 69 50" preserveAspectRatio="none"><rect x="0" y="0" width="69" height="50" fill="#eef3f6" /><ellipse cx="30" cy="40" rx="40" ry="14" fill="#d6e6f0" /><path d="M45 2q10 6 25 4v12q-12-4-25-6z" fill="#6a6a6a" opacity=".55"/><rect x="14" y="20" width="28" height="1.5" fill="#555" /><rect x="14" y="25" width="26" height="1.5" fill="#555" /><rect x="14" y="30" width="24" height="1.5" fill="#555" /><rect x="0" y="42" width="40" height="3" fill="#777" /></svg></svg>
<svg class="abs" style="left:578px;top:311px" width="93" height="56" viewBox="0 0 93 56"><rect width="93" height="56" fill="#787878"/><rect x="2" y="3.0" width="6.2" height="4.2" fill="#fff"/><rect x="84.8" y="3.0" width="6.2" height="4.2" fill="#fff"/><rect x="2" y="12.2" width="6.2" height="4.2" fill="#fff"/><rect x="84.8" y="12.2" width="6.2" height="4.2" fill="#fff"/><rect x="2" y="21.3" width="6.2" height="4.2" fill="#fff"/><rect x="84.8" y="21.3" width="6.2" height="4.2" fill="#fff"/><rect x="2" y="30.5" width="6.2" height="4.2" fill="#fff"/><rect x="84.8" y="30.5" width="6.2" height="4.2" fill="#fff"/><rect x="2" y="39.6" width="6.2" height="4.2" fill="#fff"/><rect x="84.8" y="39.6" width="6.2" height="4.2" fill="#fff"/><rect x="2" y="48.8" width="6.2" height="4.2" fill="#fff"/><rect x="84.8" y="48.8" width="6.2" height="4.2" fill="#fff"/><rect x="10" y="0" width="73" height="56" fill="#262626"/><svg x="11" y="3" width="71" height="50" viewBox="0 0 69 50" preserveAspectRatio="none"><rect x="0" y="0" width="69" height="50" fill="#d8d8d6" /><rect x="0" y="0" width="69" height="3" fill="#ececec" /><rect x="2" y="8" width="62" height="1.6" fill="#555" /><rect x="2" y="13" width="62" height="1.6" fill="#555" /><rect x="2" y="18" width="62" height="1.6" fill="#555" /><rect x="48" y="12" width="6" height="2" fill="#c03030" /><rect x="10" y="24" width="16" height="1.5" fill="#666" /><rect x="10" y="30" width="16" height="1.5" fill="#666" /><rect x="10" y="36" width="16" height="1.5" fill="#666" /><rect x="10" y="42" width="16" height="1.5" fill="#666" /></svg></svg>
<svg class="abs" style="left:701px;top:315px" width="93" height="52" viewBox="0 0 93 52"><rect width="93" height="52" fill="#787878"/><rect x="2" y="3.0" width="6.2" height="4.2" fill="#fff"/><rect x="84.8" y="3.0" width="6.2" height="4.2" fill="#fff"/><rect x="2" y="11.4" width="6.2" height="4.2" fill="#fff"/><rect x="84.8" y="11.4" width="6.2" height="4.2" fill="#fff"/><rect x="2" y="19.7" width="6.2" height="4.2" fill="#fff"/><rect x="84.8" y="19.7" width="6.2" height="4.2" fill="#fff"/><rect x="2" y="28.1" width="6.2" height="4.2" fill="#fff"/><rect x="84.8" y="28.1" width="6.2" height="4.2" fill="#fff"/><rect x="2" y="36.4" width="6.2" height="4.2" fill="#fff"/><rect x="84.8" y="36.4" width="6.2" height="4.2" fill="#fff"/><rect x="2" y="44.8" width="6.2" height="4.2" fill="#fff"/><rect x="84.8" y="44.8" width="6.2" height="4.2" fill="#fff"/><rect x="10" y="0" width="73" height="52" fill="#262626"/><svg x="11" y="3" width="71" height="46" viewBox="0 0 69 46" preserveAspectRatio="none"><rect x="0" y="0" width="69" height="46" fill="#2a4a8a" /><rect x="0" y="0" width="69" height="20" fill="#3a6ab0" /><rect x="0" y="36" width="69" height="10" fill="#1a2a50" /><ellipse cx="16" cy="12" rx="4" ry="4.5" fill="#c89a80" /><rect x="9" y="16" width="14" height="30" fill="#111" /><ellipse cx="34" cy="12" rx="4" ry="4.5" fill="#c89a80" /><rect x="27" y="16" width="14" height="30" fill="#151515" /><ellipse cx="50" cy="12" rx="4" ry="4.5" fill="#c89a80" /><rect x="43" y="16" width="14" height="30" fill="#1a1a1a" /><ellipse cx="62" cy="12" rx="4" ry="4.5" fill="#c89a80" /><rect x="55" y="16" width="14" height="30" fill="#202020" /><ellipse cx="62" cy="10" rx="6" ry="3" fill="#ddd" /><rect x="32" y="18" width="4" height="22" fill="#eee" /></svg></svg>
<svg class="abs" style="left:824px;top:319px" width="93" height="49" viewBox="0 0 93 49"><rect width="93" height="49" fill="#787878"/><rect x="2" y="3.0" width="6.2" height="4.2" fill="#fff"/><rect x="84.8" y="3.0" width="6.2" height="4.2" fill="#fff"/><rect x="2" y="12.7" width="6.2" height="4.2" fill="#fff"/><rect x="84.8" y="12.7" width="6.2" height="4.2" fill="#fff"/><rect x="2" y="22.4" width="6.2" height="4.2" fill="#fff"/><rect x="84.8" y="22.4" width="6.2" height="4.2" fill="#fff"/><rect x="2" y="32.1" width="6.2" height="4.2" fill="#fff"/><rect x="84.8" y="32.1" width="6.2" height="4.2" fill="#fff"/><rect x="2" y="41.8" width="6.2" height="4.2" fill="#fff"/><rect x="84.8" y="41.8" width="6.2" height="4.2" fill="#fff"/><rect x="10" y="0" width="73" height="49" fill="#262626"/><svg x="11" y="3" width="71" height="43" viewBox="0 0 69 43" preserveAspectRatio="none"><rect x="0" y="0" width="69" height="43" fill="#333b46" /><rect x="45" y="0" width="24" height="43" fill="#4e5864" /><rect x="52" y="0" width="5" height="43" fill="#7a848e" /><ellipse cx="30" cy="24" rx="10" ry="12" fill="#c09a88" /><path d="M17 22q2-16 14-16 12 0 13 12-6-6-14-5-8 1-13 9z" fill="#141210"/><rect x="14" y="35" width="34" height="8" fill="#0e0e0e" /><path d="M0 40q10-6 18-2v10H0z" fill="#6a7078"/><ellipse cx="66" cy="26" rx="4" ry="4" fill="#eaeaea" /><rect x="0" y="0" width="69" height="4" fill="#0a0a0a" /></svg></svg>
<svg class="abs" style="left:947px;top:317px" width="93" height="50" viewBox="0 0 93 50"><rect width="93" height="50" fill="#787878"/><rect x="2" y="3.0" width="6.2" height="4.2" fill="#fff"/><rect x="84.8" y="3.0" width="6.2" height="4.2" fill="#fff"/><rect x="2" y="11.0" width="6.2" height="4.2" fill="#fff"/><rect x="84.8" y="11.0" width="6.2" height="4.2" fill="#fff"/><rect x="2" y="18.9" width="6.2" height="4.2" fill="#fff"/><rect x="84.8" y="18.9" width="6.2" height="4.2" fill="#fff"/><rect x="2" y="26.9" width="6.2" height="4.2" fill="#fff"/><rect x="84.8" y="26.9" width="6.2" height="4.2" fill="#fff"/><rect x="2" y="34.8" width="6.2" height="4.2" fill="#fff"/><rect x="84.8" y="34.8" width="6.2" height="4.2" fill="#fff"/><rect x="2" y="42.8" width="6.2" height="4.2" fill="#fff"/><rect x="84.8" y="42.8" width="6.2" height="4.2" fill="#fff"/><rect x="10" y="0" width="73" height="50" fill="#262626"/><svg x="11" y="3" width="71" height="44" viewBox="0 0 69 44" preserveAspectRatio="none"><rect x="0" y="0" width="69" height="44" fill="#4a4c2c" /><rect x="0" y="0" width="69" height="5" fill="#050505" /><rect x="0" y="5" width="69" height="12" fill="#8e9a72" /><path d="M28 50q2-28 18-33 14-2 28 3v30z" fill="#3e2e18"/><path d="M22 50q0-20 6-34l6 34z" fill="#4a3a20"/><rect x="6" y="12" width="1.5" height="30" fill="#2a2a18" /><rect x="14" y="14" width="1.2" height="26" fill="#2a2a18" /></svg></svg>
<svg class="abs" style="left:332px;top:419px" width="93" height="50" viewBox="0 0 93 50"><rect width="93" height="50" fill="#787878"/><rect x="2" y="3.0" width="6.2" height="4.2" fill="#fff"/><rect x="84.8" y="3.0" width="6.2" height="4.2" fill="#fff"/><rect x="2" y="11.0" width="6.2" height="4.2" fill="#fff"/><rect x="84.8" y="11.0" width="6.2" height="4.2" fill="#fff"/><rect x="2" y="18.9" width="6.2" height="4.2" fill="#fff"/><rect x="84.8" y="18.9" width="6.2" height="4.2" fill="#fff"/><rect x="2" y="26.9" width="6.2" height="4.2" fill="#fff"/><rect x="84.8" y="26.9" width="6.2" height="4.2" fill="#fff"/><rect x="2" y="34.8" width="6.2" height="4.2" fill="#fff"/><rect x="84.8" y="34.8" width="6.2" height="4.2" fill="#fff"/><rect x="2" y="42.8" width="6.2" height="4.2" fill="#fff"/><rect x="84.8" y="42.8" width="6.2" height="4.2" fill="#fff"/><rect x="10" y="0" width="73" height="50" fill="#262626"/><svg x="11" y="3" width="71" height="44" viewBox="0 0 69 44" preserveAspectRatio="none"><rect x="0" y="0" width="69" height="44" fill="#152045" /><path d="M14 0 4 42h20zM36 0 26 42h20zM58 0 48 42h20z" fill="#8ab8f0" opacity=".35"/><rect x="0" y="36" width="69" height="8" fill="#0c1228" /><rect x="0" y="0" width="69" height="3" fill="#3a5a90" /><ellipse cx="14" cy="18" rx="2.5" ry="3" fill="#d8b0a0" /><rect x="10" y="21" width="8" height="16" fill="#222" /><rect x="12" y="37" width="1.5" height="5" fill="#ddd" /><ellipse cx="24" cy="18" rx="2.5" ry="3" fill="#d8b0a0" /><rect x="20" y="21" width="8" height="16" fill="#111" /><rect x="22" y="37" width="1.5" height="5" fill="#ddd" /><ellipse cx="36" cy="18" rx="2.5" ry="3" fill="#d8b0a0" /><rect x="32" y="21" width="8" height="16" fill="#1a1a1a" /><rect x="34" y="37" width="1.5" height="5" fill="#ddd" /><ellipse cx="48" cy="18" rx="2.5" ry="3" fill="#d8b0a0" /><rect x="44" y="21" width="8" height="16" fill="#c42020" /><rect x="46" y="37" width="1.5" height="5" fill="#ddd" /><ellipse cx="58" cy="18" rx="2.5" ry="3" fill="#d8b0a0" /><rect x="54" y="21" width="8" height="16" fill="#c02020" /><rect x="56" y="37" width="1.5" height="5" fill="#ddd" /></svg></svg>
<svg class="abs" style="left:455px;top:413px" width="93" height="56" viewBox="0 0 93 56"><rect width="93" height="56" fill="#787878"/><rect x="2" y="3.0" width="6.2" height="4.2" fill="#fff"/><rect x="84.8" y="3.0" width="6.2" height="4.2" fill="#fff"/><rect x="2" y="12.2" width="6.2" height="4.2" fill="#fff"/><rect x="84.8" y="12.2" width="6.2" height="4.2" fill="#fff"/><rect x="2" y="21.3" width="6.2" height="4.2" fill="#fff"/><rect x="84.8" y="21.3" width="6.2" height="4.2" fill="#fff"/><rect x="2" y="30.5" width="6.2" height="4.2" fill="#fff"/><rect x="84.8" y="30.5" width="6.2" height="4.2" fill="#fff"/><rect x="2" y="39.6" width="6.2" height="4.2" fill="#fff"/><rect x="84.8" y="39.6" width="6.2" height="4.2" fill="#fff"/><rect x="2" y="48.8" width="6.2" height="4.2" fill="#fff"/><rect x="84.8" y="48.8" width="6.2" height="4.2" fill="#fff"/><rect x="10" y="0" width="73" height="56" fill="#262626"/><svg x="11" y="3" width="71" height="50" viewBox="0 0 69 50" preserveAspectRatio="none"><rect x="0" y="0" width="69" height="50" fill="#b3a9c4" /><path d="M0 4h40l16 48H0z" fill="#c2b9d2"/><path d="M40 4h31v20L52 30z" fill="#a89ebb"/><rect x="0" y="0" width="69" height="5" fill="#c43a3a" /><rect x="12" y="16" width="24" height="1.5" fill="#7a7288" /><rect x="38" y="34" width="14" height="1" fill="#7a7288" /><ellipse cx="50" cy="34" rx="3" ry="3" fill="#222" /><rect x="46" y="36" width="8" height="12" fill="#c41e1e" /><ellipse cx="58" cy="34" rx="3" ry="3" fill="#222" /><rect x="54" y="36" width="8" height="12" fill="#c41e1e" /><ellipse cx="66" cy="34" rx="3" ry="3" fill="#222" /><rect x="62" y="36" width="8" height="12" fill="#c41e1e" /><rect x="40" y="47" width="30" height="1.5" fill="#eee" /></svg></svg>
<svg class="abs" style="left:578px;top:415px" width="93" height="54" viewBox="0 0 93 54"><rect width="93" height="54" fill="#787878"/><rect x="2" y="3.0" width="6.2" height="4.2" fill="#fff"/><rect x="84.8" y="3.0" width="6.2" height="4.2" fill="#fff"/><rect x="2" y="11.8" width="6.2" height="4.2" fill="#fff"/><rect x="84.8" y="11.8" width="6.2" height="4.2" fill="#fff"/><rect x="2" y="20.5" width="6.2" height="4.2" fill="#fff"/><rect x="84.8" y="20.5" width="6.2" height="4.2" fill="#fff"/><rect x="2" y="29.3" width="6.2" height="4.2" fill="#fff"/><rect x="84.8" y="29.3" width="6.2" height="4.2" fill="#fff"/><rect x="2" y="38.0" width="6.2" height="4.2" fill="#fff"/><rect x="84.8" y="38.0" width="6.2" height="4.2" fill="#fff"/><rect x="2" y="46.8" width="6.2" height="4.2" fill="#fff"/><rect x="84.8" y="46.8" width="6.2" height="4.2" fill="#fff"/><rect x="10" y="0" width="73" height="54" fill="#262626"/><svg x="11" y="3" width="71" height="48" viewBox="0 0 69 48" preserveAspectRatio="none"><rect x="0" y="0" width="69" height="48" fill="#26262c" /><rect x="4" y="8" width="16" height="10" fill="#2a8ae0" /><rect x="52" y="14" width="16" height="8" fill="#2a8ae0" /><path d="M24 10l4-6 6 6h6l6-6 4 6v16q-13 10-26 0z" fill="#c8a060"/><path d="M33 18l4-4 4 4v10h-8z" fill="#fff"/><rect x="20" y="34" width="34" height="14" fill="#6a5048" /></svg></svg>
<svg class="abs" style="left:701px;top:415px" width="93" height="54" viewBox="0 0 93 54"><rect width="93" height="54" fill="#787878"/><rect x="2" y="3.0" width="6.2" height="4.2" fill="#fff"/><rect x="84.8" y="3.0" width="6.2" height="4.2" fill="#fff"/><rect x="2" y="11.8" width="6.2" height="4.2" fill="#fff"/><rect x="84.8" y="11.8" width="6.2" height="4.2" fill="#fff"/><rect x="2" y="20.5" width="6.2" height="4.2" fill="#fff"/><rect x="84.8" y="20.5" width="6.2" height="4.2" fill="#fff"/><rect x="2" y="29.3" width="6.2" height="4.2" fill="#fff"/><rect x="84.8" y="29.3" width="6.2" height="4.2" fill="#fff"/><rect x="2" y="38.0" width="6.2" height="4.2" fill="#fff"/><rect x="84.8" y="38.0" width="6.2" height="4.2" fill="#fff"/><rect x="2" y="46.8" width="6.2" height="4.2" fill="#fff"/><rect x="84.8" y="46.8" width="6.2" height="4.2" fill="#fff"/><rect x="10" y="0" width="73" height="54" fill="#262626"/><svg x="11" y="3" width="71" height="48" viewBox="0 0 69 48" preserveAspectRatio="none"><rect x="0" y="0" width="69" height="48" fill="#242430" /><path d="M26 10l4-6 6 6h6l6-6 4 6v16q-13 10-26 0z" fill="#c8a060"/><path d="M35 18l4-4 4 4v10h-8z" fill="#fff"/><path d="M0 14l24 14-2 4L0 20z" fill="#e87070"/><rect x="22" y="34" width="34" height="14" fill="#7a5a50" /><rect x="70" y="4" width="2" height="3" fill="#e04040" /></svg></svg>
<svg class="abs" style="left:824px;top:415px" width="93" height="54" viewBox="0 0 93 54"><rect width="93" height="54" fill="#787878"/><rect x="2" y="3.0" width="6.2" height="4.2" fill="#fff"/><rect x="84.8" y="3.0" width="6.2" height="4.2" fill="#fff"/><rect x="2" y="11.8" width="6.2" height="4.2" fill="#fff"/><rect x="84.8" y="11.8" width="6.2" height="4.2" fill="#fff"/><rect x="2" y="20.5" width="6.2" height="4.2" fill="#fff"/><rect x="84.8" y="20.5" width="6.2" height="4.2" fill="#fff"/><rect x="2" y="29.3" width="6.2" height="4.2" fill="#fff"/><rect x="84.8" y="29.3" width="6.2" height="4.2" fill="#fff"/><rect x="2" y="38.0" width="6.2" height="4.2" fill="#fff"/><rect x="84.8" y="38.0" width="6.2" height="4.2" fill="#fff"/><rect x="2" y="46.8" width="6.2" height="4.2" fill="#fff"/><rect x="84.8" y="46.8" width="6.2" height="4.2" fill="#fff"/><rect x="10" y="0" width="73" height="54" fill="#262626"/><svg x="11" y="3" width="71" height="48" viewBox="0 0 69 48" preserveAspectRatio="none"><rect x="0" y="0" width="69" height="48" fill="#bcb8b4" /><ellipse cx="28" cy="28" rx="26" ry="14" fill="#ece8e4" /><ellipse cx="58" cy="24" rx="14" ry="12" fill="#f2f0ee" /><ellipse cx="44" cy="22" rx="8" ry="6" fill="#8a8480" /><rect x="0" y="40" width="69" height="8" fill="#d0ccc8" /><rect x="50" y="2" width="22" height="10" fill="#c07060" opacity='.6'/></svg></svg>
<svg class="abs" style="left:947px;top:415px" width="93" height="54" viewBox="0 0 93 54"><rect width="93" height="54" fill="#787878"/><rect x="2" y="3.0" width="6.2" height="4.2" fill="#fff"/><rect x="84.8" y="3.0" width="6.2" height="4.2" fill="#fff"/><rect x="2" y="11.8" width="6.2" height="4.2" fill="#fff"/><rect x="84.8" y="11.8" width="6.2" height="4.2" fill="#fff"/><rect x="2" y="20.5" width="6.2" height="4.2" fill="#fff"/><rect x="84.8" y="20.5" width="6.2" height="4.2" fill="#fff"/><rect x="2" y="29.3" width="6.2" height="4.2" fill="#fff"/><rect x="84.8" y="29.3" width="6.2" height="4.2" fill="#fff"/><rect x="2" y="38.0" width="6.2" height="4.2" fill="#fff"/><rect x="84.8" y="38.0" width="6.2" height="4.2" fill="#fff"/><rect x="2" y="46.8" width="6.2" height="4.2" fill="#fff"/><rect x="84.8" y="46.8" width="6.2" height="4.2" fill="#fff"/><rect x="10" y="0" width="73" height="54" fill="#262626"/><svg x="11" y="3" width="71" height="48" viewBox="0 0 69 48" preserveAspectRatio="none"><rect x="0" y="0" width="69" height="48" fill="#d8c8a8" /><rect x="0" y="0" width="69" height="18" fill="#e8e0d0" /><path d="M0 50 30 20h42v30z" fill="#b89060"/><path d="M30 24h24l6 8v22H32z" fill="#f0f0ee"/><path d="M26 14h26l8 8-8 6H30z" fill="#e09a30"/><rect x="4" y="4" width="10" height="40" fill="#f0ead8" /></svg></svg>
<div class="abs dt" style="left:319px;top:288px;width:120px;text-align:center;color:#000">视频</div>
<div class="abs dt" style="left:442px;top:288px;width:120px;text-align:center;color:#000">GPUCache</div>
<div class="abs dt" style="left:565px;top:288px;width:120px;text-align:center;color:#000">穿搭教程</div>
<div class="abs dt" style="left:688px;top:288px;width:120px;text-align:center;color:#000">美妆教程</div>
<div class="abs dt" style="left:811px;top:288px;width:120px;text-align:center;color:#000">录像1</div>
<div class="abs dt" style="left:934px;top:288px;width:120px;text-align:center;color:#000">录像2</div>
<div class="abs dt" style="left:319px;top:373px;width:120px;text-align:center;color:#000">数字1-10</div>
<div class="abs dt" style="left:442px;top:373px;width:120px;text-align:center;color:#000">教学视频3-在酒</div>
<div class="abs dt" style="left:442px;top:389px;width:120px;text-align:center;color:#000">楼上</div>
<div class="abs dt" style="left:565px;top:373px;width:120px;text-align:center;color:#000">教学视频-数学</div>
<div class="abs dt" style="left:688px;top:373px;width:120px;text-align:center;color:#000">百战成诗</div>
<div class="abs dt" style="left:811px;top:373px;width:120px;text-align:center;color:#000">起风了</div>
<div class="abs dt" style="left:934px;top:373px;width:120px;text-align:center;color:#000">芒种</div>
<div class="abs dt" style="left:319px;top:474px;width:120px;text-align:center;color:#000">踏山河2</div>
<div class="abs dt" style="left:442px;top:474px;width:120px;text-align:center;color:#000">智慧农业1</div>
<div class="abs dt" style="left:565px;top:474px;width:120px;text-align:center;color:#000">猫3</div>
<div class="abs dt" style="left:688px;top:474px;width:120px;text-align:center;color:#000">猫2</div>
<div class="abs dt" style="left:811px;top:474px;width:120px;text-align:center;color:#000">猫1</div>
<div class="abs dt" style="left:934px;top:474px;width:120px;text-align:center;color:#000">猫喂食</div>
<div class="abs" style="left:332px;top:534px;width:93px;height:2px;background:#555"></div>
<div class="abs" style="left:455px;top:534px;width:93px;height:2px;background:#555"></div>
<div class="abs" style="left:578px;top:534px;width:93px;height:2px;background:#555"></div>
<div class="abs" style="left:701px;top:534px;width:93px;height:2px;background:#555"></div>
<svg class="abs" style="left:840px;top:502px" width="63" height="34" viewBox="0 0 63 34"><path d="M.5 .5h44l18 18V34H.5z" fill="#fafafa" stroke="#dcdcdc"/><path d="M44.5 .5v18h18" fill="#e8e8e8" stroke="#dcdcdc"/><circle cx="31" cy="36" r="16" fill="#e57a3a"/><circle cx="31" cy="37" r="12" fill="#333"/></svg>
<div class="abs" style="left:947px;top:532px;width:93px;height:4px;background:#787878"></div><div class="abs" style="left:957px;top:532px;width:73px;height:4px;background:#333"></div>
<svg class="abs" style="left:720px;top:376px" width="13" height="20" viewBox="0 0 13 20"><path d="M1 1v15l3.5-3.5 2.8 6 2.2-1-2.8-6H12z" fill="#fff" stroke="#000" stroke-width="1"/></svg>
<!--/DIALOG-->
</body></html>
